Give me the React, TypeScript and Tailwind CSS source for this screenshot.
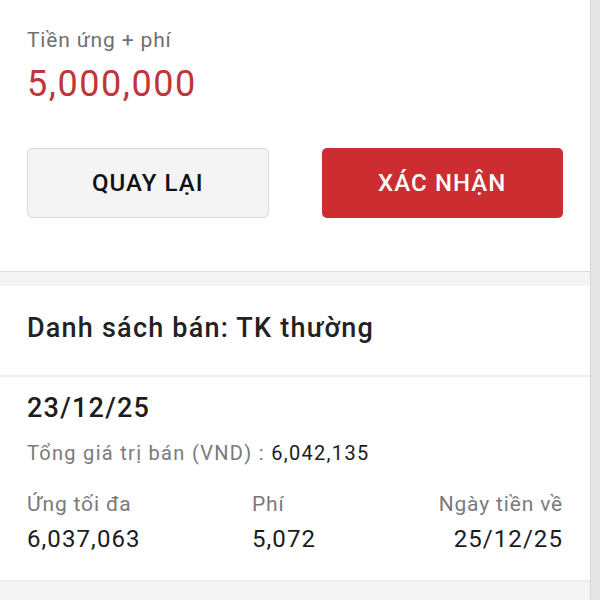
import React from 'react';

const font = { fontFamily: 'Roboto, "Noto Sans", sans-serif' };

const App: React.FC = () => {
  return (
    <div className="flex w-[600px] h-[600px] overflow-hidden bg-[#f4f4f4]" style={font}>
      <div className="flex-1 flex flex-col">
        {/* Summary + actions */}
        <div className="bg-white px-[27px] pt-[28px] pb-[53px] border-b border-[#dcdcdc]">
          <div className="text-[21px] leading-[24px] tracking-[0.04em] text-[#6f6f6f]">Tiền ứng + phí</div>
          <div className="mt-[12px] text-[36px] leading-[40px] tracking-[0.043em] text-[#c0343a]">5,000,000</div>
          <div className="mt-[44px] grid grid-cols-2 gap-[53px]">
            <button className="h-[70px] rounded-[5px] bg-[#f4f4f4] border border-[#dadada] text-[24px] font-medium text-[#111] tracking-[0.045em]">
              QUAY LẠI
            </button>
            <button className="h-[70px] rounded-[5px] bg-[#cb2d30] text-[24px] font-medium text-white tracking-[0.045em]">
              XÁC NHẬN
            </button>
          </div>
        </div>

        <div className="h-[14px]" />

        {/* Sell list */}
        <div className="bg-white">
          <div className="px-[27px] pt-[27px] pb-[32px] border-b-2 border-[#eeeeee]">
            <h2 className="text-[27px] leading-[30px] font-medium tracking-[0.045em] text-[#222]">Danh sách bán: TK thường</h2>
          </div>
          <div className="px-[27px] pt-[16px] pb-[28px] border-b-2 border-[#ececec]">
            <div className="text-[27px] leading-[30px] font-medium tracking-[0.046em] text-[#1c1c1c]">23/12/25</div>
            <div className="mt-[18px] text-[20px] leading-[24px] tracking-[0.065em] text-[#7a7a7a]">
              Tổng giá trị bán (VND) : <span className="text-[#1c1c1c]">6,042,135</span>
            </div>
            <div className="mt-[27px] grid grid-cols-[225px_1fr_auto] text-[21px] leading-[24px] tracking-[0.04em] text-[#7a7a7a]">
              <span>Ứng tối đa</span>
              <span>Phí</span>
              <span className="text-right">Ngày tiền về</span>
            </div>
            <div className="mt-[10px] grid grid-cols-[225px_1fr_auto] text-[24px] leading-[26px] tracking-[0.045em] text-[#1c1c1c]">
              <span>6,037,063</span>
              <span>5,072</span>
              <span className="text-right">25/12/25</span>
            </div>
          </div>
        </div>
      </div>
      {/* scroll track */}
      <div className="w-[10px] bg-[#e6e6e6] border-l border-[#d6d6d6]" />
    </div>
  );
};

export default App;
